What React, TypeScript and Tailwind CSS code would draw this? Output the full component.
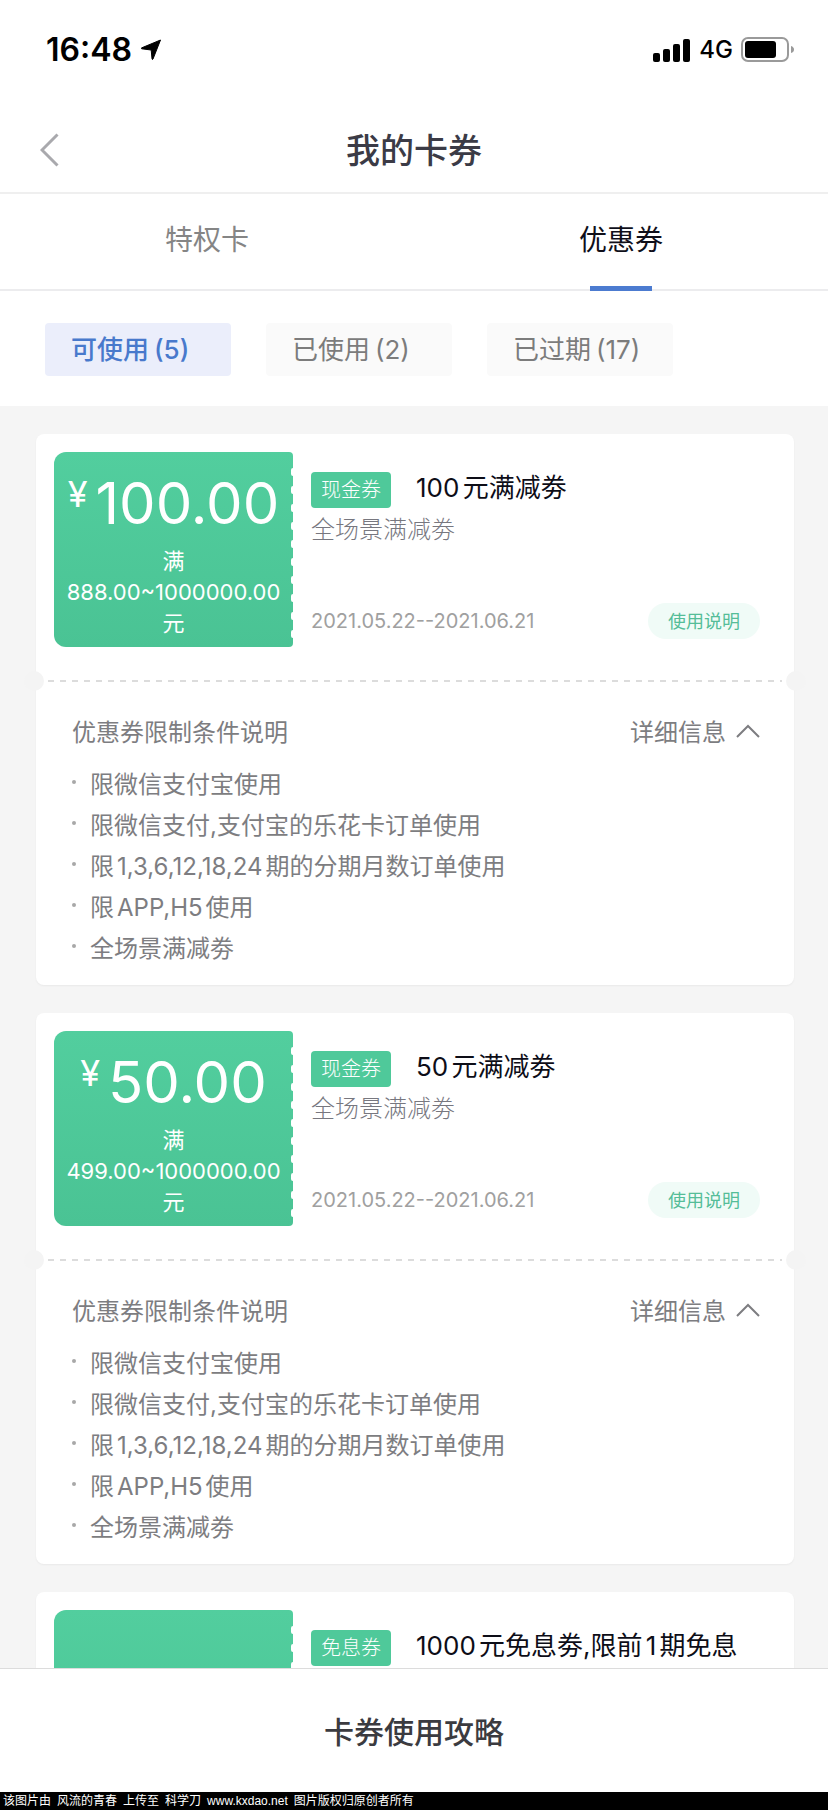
import { useState } from "react";

type Coupon = {
  id: number;
  amount?: string;
  range?: string;
  tag: string;
  title: string;
  scope?: string;
  period?: string;
  limits: string[];
};

const limits = [
  "限微信支付宝使用",
  "限微信支付,支付宝的乐花卡订单使用",
  "限1,3,6,12,18,24期的分期月数订单使用",
  "限APP,H5使用",
  "全场景满减劵",
];

const coupons: Coupon[] = [
  {
    id: 1,
    amount: "100.00",
    range: "888.00~1000000.00",
    tag: "现金券",
    title: "100元满减劵",
    scope: "全场景满减劵",
    period: "2021.05.22--2021.06.21",
    limits,
  },
  {
    id: 2,
    amount: "50.00",
    range: "499.00~1000000.00",
    tag: "现金券",
    title: "50元满减劵",
    scope: "全场景满减劵",
    period: "2021.05.22--2021.06.21",
    limits,
  },
  {
    id: 3,
    tag: "免息券",
    title: "1000元免息劵,限前1期免息",
    limits: [],
  },
];

const tabs = ["特权卡", "优惠券"];

const filters = [
  { label: "可使用", count: 5 },
  { label: "已使用", count: 2 },
  { label: "已过期", count: 17 },
];

function StatusBar() {
  return (
    <div className="flex h-25 items-center justify-between pr-[33px] pl-[46px] text-black">
      <div className="flex items-center gap-2">
        <span className="text-[32px] font-semibold">16:48</span>
        <svg width="22" height="22" viewBox="0 0 22 22" aria-hidden="true">
          <path d="M20.500 1 13 20q-.6 1.200-1-.2L11.200 11 1.800 9.800q-1.200-.4 0-1Z" fill="currentColor" stroke="currentColor" strokeLinejoin="round" />
        </svg>
      </div>
      <div className="flex items-center gap-2">
        <svg width="38" height="23" viewBox="0 0 38 23" fill="currentColor" aria-hidden="true">
          <rect x="0" y="14" width="7" height="9" rx="2" />
          <rect x="10" y="10" width="7" height="13" rx="2" />
          <rect x="20" y="5" width="7" height="18" rx="2" />
          <rect x="30" y="0" width="7" height="23" rx="2" />
        </svg>
        <span className="text-[24px] font-medium">4G</span>
        <svg width="54" height="26" viewBox="0 0 54 26" aria-hidden="true">
          <rect x="1" y="1" width="46" height="23" rx="6" fill="none" stroke="#9a9a9a" strokeWidth="2" />
          <rect x="4" y="4" width="31" height="17" rx="3" fill="#000" />
          <path d="M50 9q3 1 3 3.500t-3 3.500Z" fill="#9a9a9a" />
        </svg>
      </div>
    </div>
  );
}

function Ticket({ amount, range }: { amount?: string; range?: string }) {
  return (
    <div className="relative h-[195px] w-[239px] shrink-0 rounded-l-xl rounded-r-sm bg-linear-to-b from-[#52ce9e] to-[#4ac394] text-center text-white">
      {amount && (
        <>
          <div className="flex items-start justify-center gap-2 pt-4">
            <span className="pt-2 text-[36px] leading-9">¥</span>
            <span className="text-[58px] leading-[70px]">{amount}</span>
          </div>
          <p className="mt-2 text-[22px] leading-[31px]">
            满
            <br />
            {range}
            <br />
            元
          </p>
        </>
      )}
      <svg className="absolute top-0 right-0 h-full w-[3px]" aria-hidden="true">
        <line x1="3" y1="18" x2="3" y2="184" stroke="#fff" strokeWidth="4" strokeLinecap="round" strokeDasharray="4 14" />
      </svg>
    </div>
  );
}

function CouponCard({ coupon }: { coupon: Coupon }) {
  const [open, setOpen] = useState(true);

  return (
    <li className="relative">
      <div className="flex h-[247px] gap-[18px] rounded-lg bg-white p-[18px] shadow-xs">
        <Ticket amount={coupon.amount} range={coupon.range} />
        <div className="flex h-[195px] min-w-0 flex-1 flex-col pt-5 pr-4">
          <div className="flex items-center gap-[25px]">
            <span className="flex h-9 w-20 shrink-0 items-center justify-center rounded bg-[#4fc99a] text-[20px] font-light text-white">
              {coupon.tag}
            </span>
            <h2 className="pb-1 text-[26px] leading-8 whitespace-nowrap text-[#0d0d17]">{coupon.title}</h2>
          </div>
          {coupon.scope && <p className="mt-1 text-[24px] leading-9 font-light text-[#77777f]">{coupon.scope}</p>}
          {coupon.period && (
            <div className="mt-auto mb-2 flex items-center justify-between">
              <time className="text-[20px] text-[#a0a0a0]">{coupon.period}</time>
              <button className="h-9 w-28 rounded-full bg-[#f0fbf7] text-[18px] text-[#55bd98]">使用说明</button>
            </div>
          )}
        </div>
      </div>

      {coupon.limits.length > 0 && (
        <>
          <div className="absolute top-[237px] -left-3 size-5 rounded-full bg-[#f4f4f4]" />
          <div className="absolute top-[237px] -right-3 size-5 rounded-full bg-[#f4f4f4]" />
          <svg className="absolute top-[246px] left-3 h-0.5 w-[calc(100%-24px)]" aria-hidden="true">
            <line x1="0" y1="1" x2="100%" y2="1" stroke="#dcdcdc" strokeWidth="2" strokeDasharray="6 6" />
          </svg>

          <div className="rounded-lg bg-white pt-8 pr-[34px] pb-4 pl-9 text-[24px] text-[#7d7d81] shadow-xs">
            <div className="flex items-center justify-between leading-10">
              <h3>优惠券限制条件说明</h3>
              <button onClick={() => setOpen(!open)} aria-expanded={open} className="flex items-center gap-[10px]">
                详细信息
                <svg width="24" height="18" viewBox="0 0 24 18" fill="none" stroke="currentColor" strokeWidth="2" aria-hidden="true" className={open ? "" : "rotate-180"}>
                  <path d="m1 13 11-11 11 11" />
                </svg>
              </button>
            </div>
            {open && (
              <ul className="mt-[11px]">
                {coupon.limits.map((limit) => (
                  <li key={limit} className="flex gap-[14px] leading-[41px]">
                    <span className="mt-4 size-1 rounded-full bg-[#a8a8a8]" />
                    {limit}
                  </li>
                ))}
              </ul>
            )}
          </div>
        </>
      )}
    </li>
  );
}

export default function App() {
  const [tab, setTab] = useState(1);
  const [filter, setFilter] = useState(0);

  return (
    <div className="flex h-screen flex-col overflow-hidden bg-[#f5f5f5] font-[Inter,'Noto_Sans_CJK_SC',sans-serif] [text-autospace:normal]">
      <div className="bg-white">
        <StatusBar />
        <header className="grid h-[94px] grid-cols-[80px_1fr_80px] items-center border-b-2 border-[#efefef] pt-2">
          <button aria-label="返回" className="flex h-full items-center pl-10">
            <svg width="19" height="34" viewBox="0 0 19 34" fill="none" stroke="#a9a9ad" strokeWidth="3" aria-hidden="true">
              <path d="M17.500 1.500 2 17l15.500 15.500" />
            </svg>
          </button>
          <h1 className="text-center text-[34px] font-medium text-[#3b3b46]">我的卡券</h1>
        </header>

        <nav className="grid h-[97px] grid-cols-2 border-b-2 border-[#ececee]">
          {tabs.map((name, i) => (
            <button
              key={name}
              onClick={() => setTab(i)}
              className={`relative pb-1 text-[28px] ${tab === i ? "text-[#0f0f1a]" : "text-[#858585]"}`}
            >
              {name}
              {tab === i && <span className="absolute -bottom-0.5 left-1/2 h-[5px] w-[62px] -translate-x-1/2 bg-[#4c7bd0]" />}
            </button>
          ))}
        </nav>

        <div className="flex gap-[35px] px-[45px] pt-8 pb-[30px]">
          {filters.map((f, i) => (
            <button
              key={f.label}
              onClick={() => setFilter(i)}
              className={`flex h-[53px] w-[186px] items-center gap-[5px] rounded pl-[26px] text-[26px] ${
                filter === i ? "bg-[#ebeefb] font-medium text-[#4879cc]" : "bg-[#fafafa] text-[#7c7c7c]"
              }`}
            >
              {f.label}
              <span>({f.count})</span>
            </button>
          ))}
        </div>
      </div>

      <main className="min-h-0 flex-1 overflow-y-auto pt-7 pr-[34px] pl-9 [scrollbar-width:none]">
        <ul className="flex flex-col gap-7">
          {coupons.map((coupon) => (
            <CouponCard key={coupon.id} coupon={coupon} />
          ))}
        </ul>
      </main>

      <button className="h-[124px] shrink-0 border-t border-[#dcdcdc] bg-white pt-1 text-[30px] font-medium text-[#3b3b40]">
        卡券使用攻略
      </button>
      <footer className="h-[18px] shrink-0 bg-black px-[3px] font-['Liberation_Sans','Noto_Sans_CJK_SC',sans-serif] text-[12px] leading-[18px] text-white">
        <p className="flex gap-[6px] whitespace-nowrap">
          <span>该图片由</span>
          <span>风流的青春</span>
          <span>上传至</span>
          <span>科学刀</span>
          <span>www.kxdao.net</span>
          <span>图片版权归原创者所有</span>
        </p>
      </footer>
    </div>
  );
}
